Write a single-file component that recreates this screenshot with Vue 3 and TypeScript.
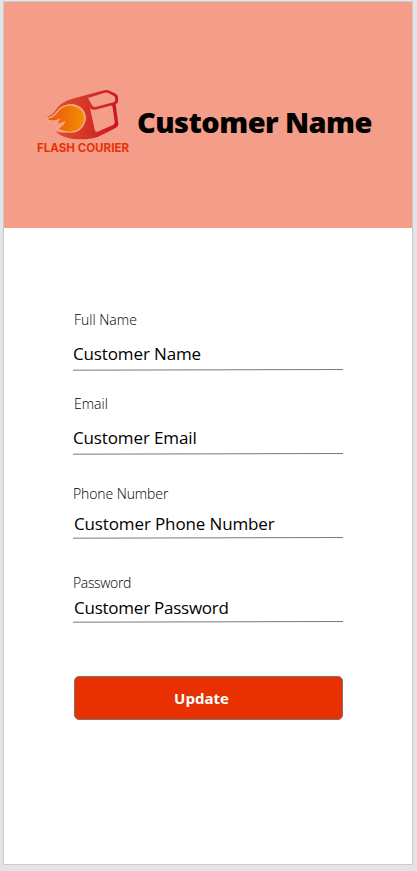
<script setup lang="ts">
interface Field {
  id: string
  label: string
  value: string
}

const fields: Field[] = [
  { id: 'name', label: 'Full Name', value: 'Customer Name' },
  { id: 'email', label: 'Email', value: 'Customer Email' },
  { id: 'phone', label: 'Phone Number', value: 'Customer Phone Number' },
  { id: 'password', label: 'Password', value: 'Customer Password' },
]
</script>

<template>
  <main class="screen">
    <header class="header">
      <svg class="logo" viewBox="0 0 330 240" role="img" aria-label="Flash Courier">
        <defs>
          <linearGradient id="shell" x1="0" x2="1" y1="0" y2="0">
            <stop offset="0" stop-color="#e85522" />
            <stop offset="0.5" stop-color="#d63a26" />
            <stop offset="1" stop-color="#cb1424" />
          </linearGradient>
          <linearGradient id="flame" x1="0" x2="1" y1="0" y2="0">
            <stop offset="0" stop-color="#e84f0c" />
            <stop offset="1" stop-color="#f39000" />
          </linearGradient>
        </defs>
        <path class="shell" d="M42 112Q62 111 75 93Q91 67 124 57L223 31Q231 28 238 32L257 41Q264 45 264 53V64Q264 70 257 73L265 131Q266 139 258 143L203 171Q179 179 143 178Q100 177 76 154Q95 160 110 157Q162 151 168 116Q166 78 127 73Q98 71 80 94Q64 116 42 112Z" />
        <path class="cutout" d="M174 54L224 38Q230 36 235 39L251 47Q256 50 256 56V61Q256 65 251 67L196 81Q189 82 186 76Z" />
        <path class="cutout" d="M180 85Q187 91 196 89L240 77Q247 75 248 82L254 126Q255 132 249 135L202 155Q195 157 194 149Z" />
        <path class="flame" d="M44 113Q66 118 82 95Q99 73 126 75Q162 80 165 115Q161 151 127 156Q100 158 80 144Q94 143 102 127Q91 134 75 132Q84 127 87 119Q65 130 44 113Z" />
        <text class="brand" x="21" y="216" textLength="276" lengthAdjust="spacingAndGlyphs">FLASH COURIER</text>
      </svg>
      <h1 class="title">Customer Name</h1>
    </header>

    <form class="form" @submit.prevent>
      <div v-for="field in fields" :key="field.id" class="field" :class="field.id">
        <span class="label">{{ field.label }}</span>
        <span class="value">{{ field.value }}</span>
        <svg class="rule" viewBox="0 0 270 3" aria-hidden="true">
          <line x1="0" y1="1.2" x2="270" y2="0.5" />
        </svg>
      </div>
      <button class="update" type="submit">Update</button>
    </form>
  </main>
</template>

<style>
body {
  background: #e4e4e4;
}
</style>

<style scoped>
.screen {
  box-sizing: border-box;
  width: 410px;
  height: 864px;
  margin: 1px 0 0 3px;
  border: 1px solid #cacaca;
  background: #fff;
  font-family: "Open Sans", "Noto Sans", sans-serif;
  color: #000;
  display: flex;
  flex-direction: column;
}
.header {
  box-sizing: border-box;
  height: 226px;
  padding: 78px 0 0 26px;
  background: #f49d88;
  display: flex;
  align-items: flex-start;
}
.logo {
  width: 110px;
  height: 80px;
  flex: none;
}
.shell {
  fill: url(#shell);
}
.cutout {
  fill: #f49d88;
}
.flame {
  fill: url(#flame);
  stroke: #f6a58c;
  stroke-width: 4;
}
.brand {
  font-family: Inter, sans-serif;
  font-size: 35px;
  font-weight: 700;
  fill: #e83205;
}
.title {
  margin: 22px 0 0 -3px;
  font-size: 29px;
  line-height: 40px;
  font-weight: 800;
  letter-spacing: -0.57px;
  white-space: nowrap;
}
.form {
  padding: 78px 0 0 69px;
  width: 270px;
  display: flex;
  flex-direction: column;
}
.field {
  height: 84px;
  box-sizing: border-box;
  display: flex;
  flex-direction: column;
}
.label {
  padding-left: 1px;
  font-size: 14px;
  font-weight: 300;
  line-height: 28px;
}
.value {
  margin-top: auto;
  font-size: 17px;
  line-height: 24px;
  letter-spacing: -0.13px;
}
.rule {
  width: 270px;
  height: 3px;
  flex: none;
  margin-top: 3px;
}
.rule line {
  stroke: #777;
  stroke-width: 1;
}
.name {
  height: 66px;
}
.email {
  padding-top: 18px;
}
.phone {
  padding-top: 24px;
}
.password {
  padding-top: 29px;
}
.phone .label,
.password .label {
  padding-left: 0;
  letter-spacing: -0.1px;
}
.password .label {
  letter-spacing: -0.35px;
}
.phone .value,
.password .value {
  padding-left: 1px;
  line-height: 20px;
}
.password .value {
  letter-spacing: -0.24px;
}
.update {
  box-sizing: border-box;
  width: 269px;
  height: 44px;
  margin: 52px 0 0 1px;
  padding: 0;
  border: 1px solid #80736f;
  border-radius: 5px;
  background: #e83000;
  color: #fff;
  font: 700 15px/24px "Open Sans", sans-serif;
  text-indent: -14px;
}
</style>
